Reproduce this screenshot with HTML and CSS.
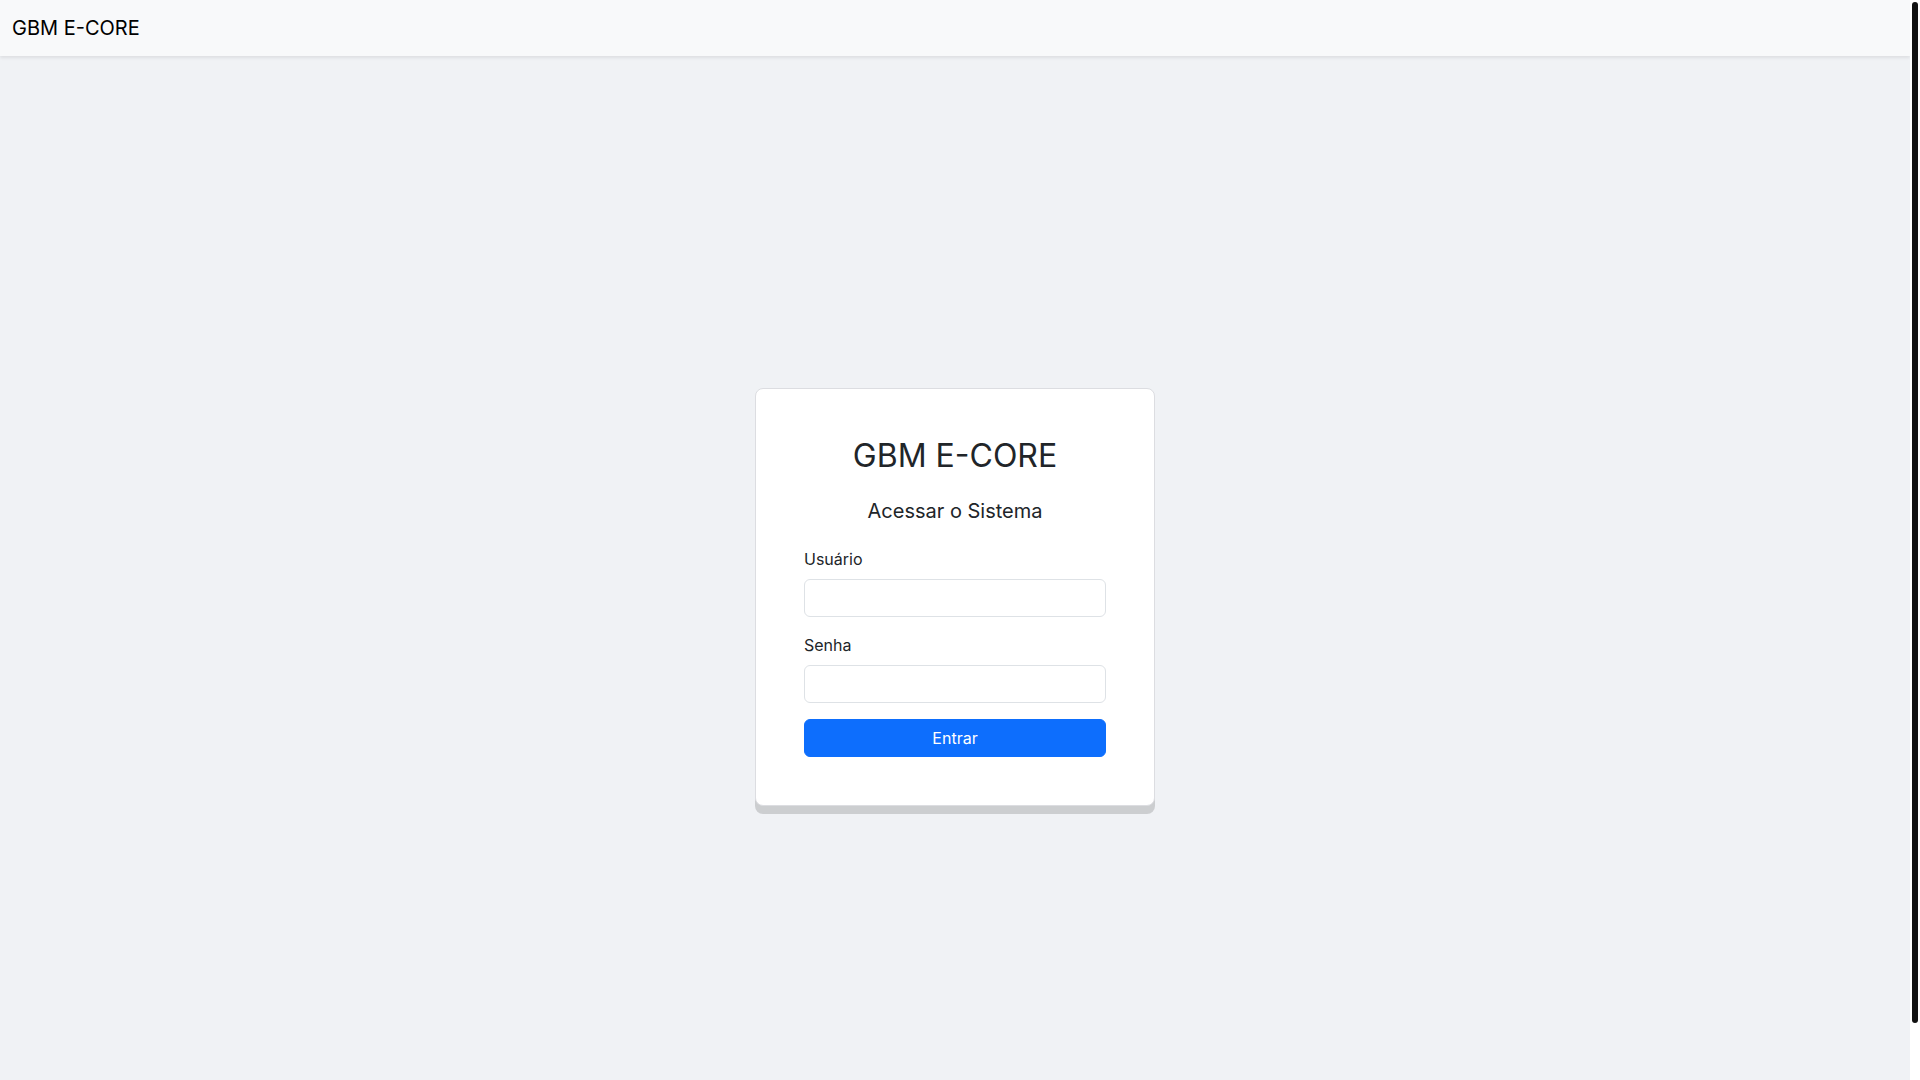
FILE: index.html
```html
<!DOCTYPE html>
<html lang="pt-BR">
<head>
<meta charset="utf-8">
<title>GBM E-CORE</title>
<link rel="stylesheet" href="styles.css">
</head>
<body>
<nav class="navbar">
  <a class="brand" href="#">GBM E-CORE</a>
</nav>
<main class="main">
  <div class="card">
    <h2 class="title">GBM E-CORE</h2>
    <h5 class="subtitle">Acessar o Sistema</h5>
    <form class="form">
      <div class="group">
        <label class="label" for="user">Usuário</label>
        <input class="input" id="user" type="text">
      </div>
      <div class="group">
        <label class="label" for="pass">Senha</label>
        <input class="input" id="pass" type="password">
      </div>
      <button class="btn" type="button">Entrar</button>
    </form>
  </div>
</main>
<div class="scrollbar" aria-hidden="true"><div class="scrollbar-thumb"></div></div>
</body>
</html>
```

FILE: styles.css
```css
* { box-sizing: border-box; }
html { background: #f0f2f5; }
body {
  margin: 0;
  padding-right: 10px;
  font-family: Inter, "Noto Sans", sans-serif;
  font-size: 16px;
  line-height: 1.5;
  color: #212529;
  background: #f0f2f5;
}
.scrollbar {
  position: fixed;
  top: 0;
  right: 0;
  width: 10px;
  height: 100vh;
  background: #ffffff;
  padding: 2px;
  z-index: 10;
}
.scrollbar-thumb {
  width: 6px;
  height: 1021px;
  background: #111111;
  border-radius: 3px;
}
.navbar {
  height: 56px;
  padding: 8px 12px;
  background: #f8f9fa;
  box-shadow: 0 2px 3px rgba(0, 0, 0, 0.08);
  display: flex;
  align-items: center;
  position: relative;
  z-index: 1;
}
.brand {
  font-size: 20px;
  line-height: 30px;
  padding: 5px 0;
  color: #000;
  text-decoration: none;
}
.main {
  min-height: 1082px;
  display: flex;
  align-items: center;
  justify-content: center;
}
.card {
  width: 400px;
  background: #fff;
  border: 1px solid #dcdde1;
  border-radius: 8px;
  padding: 48px;
  box-shadow: 0 8px 0 rgba(0, 0, 0, 0.15);
}
.title {
  margin: 0 0 24px;
  font-size: 32px;
  font-weight: 400;
  line-height: 1.2;
  text-align: center;
}
.subtitle {
  margin: 0 0 24px;
  font-size: 20px;
  font-weight: 400;
  line-height: 1.2;
  text-align: center;
}
.form { margin: 0; }
.group { margin-bottom: 16px; }
.label {
  display: block;
  margin-bottom: 8px;
  font-size: 16px;
  line-height: 24px;
}
.input {
  display: block;
  width: 100%;
  height: 38px;
  padding: 6px 12px;
  font: inherit;
  border: 1px solid #dee2e6;
  border-radius: 6px;
  background: #fff;
}
.btn {
  display: block;
  width: 100%;
  height: 38px;
  padding: 6px 12px;
  font: inherit;
  color: #fff;
  background: #0d6efd;
  border: 1px solid #0d6efd;
  border-radius: 6px;
}
```
